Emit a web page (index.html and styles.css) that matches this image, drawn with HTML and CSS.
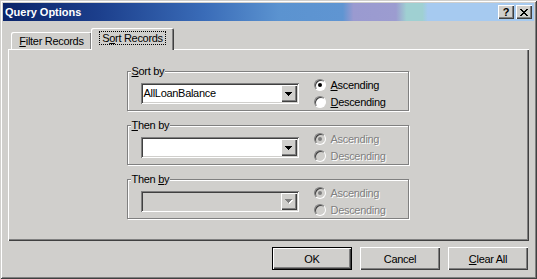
FILE: index.html
```html
<!DOCTYPE html>
<html lang="en">
<head>
  <meta charset="UTF-8">
  <title>Query Options</title>
  <link rel="stylesheet" href="styles.css">
</head>
<body>
  <div class="window">
    <div class="titlebar">
      <span class="title">Query Options</span>
      <div class="caption-btns">
        <div class="cap-btn">?</div>
        <div class="cap-btn">
          <svg width="8" height="7" viewBox="0 0 8 7" shape-rendering="crispEdges">
            <path d="M0 0h2v1h1v1h2v-1h1v-1h2v1h-1v1h-1v1h-1v1h1v1h1v1h1v1h-2v-1h-1v-1h-2v1h-1v1h-2v-1h1v-1h1v-1h1v-1h-1v-1h-1v-1h-1z" fill="#000"/>
          </svg>
        </div>
      </div>
    </div>

    <div class="content">
      <div class="tabs">
        <div class="tab"><u>F</u>ilter Records</div>
        <div class="tab tab-active"><span class="focus">S<u>o</u>rt Records</span></div>
      </div>

      <div class="panel">
        <!-- первая группа -->
        <div class="group">
          <span class="group-label"><u>S</u>ort by</span>
          <div class="combo">
            <span class="combo-text">AllLoanBalance</span>
            <span class="combo-btn">
              <svg width="7" height="4" viewBox="0 0 7 4" shape-rendering="crispEdges"><path d="M0 0h7v1h-1v1h-1v1h-1v1h-1v-1h-1v-1h-1v-1h-1z"/></svg>
            </span>
          </div>
          <div class="radios">
            <div class="radio-item"><span class="radio checked"></span><span><u>A</u>scending</span></div>
            <div class="radio-item"><span class="radio"></span><span><u>D</u>escending</span></div>
          </div>
        </div>

        <!-- вторая группа -->
        <div class="group">
          <span class="group-label"><u>T</u>hen by</span>
          <div class="combo">
            <span class="combo-text"></span>
            <span class="combo-btn">
              <svg width="7" height="4" viewBox="0 0 7 4" shape-rendering="crispEdges"><path d="M0 0h7v1h-1v1h-1v1h-1v1h-1v-1h-1v-1h-1v-1h-1z"/></svg>
            </span>
          </div>
          <div class="radios disabled">
            <div class="radio-item"><span class="radio checked"></span><span>Ascending</span></div>
            <div class="radio-item"><span class="radio"></span><span>Descending</span></div>
          </div>
        </div>

        <!-- третья группа -->
        <div class="group">
          <span class="group-label">Then <u>b</u>y</span>
          <div class="combo combo-disabled">
            <span class="combo-text"></span>
            <span class="combo-btn">
              <svg width="8" height="5" viewBox="0 0 8 5" shape-rendering="crispEdges"><path d="M1 1h7v1h-1v1h-1v1h-1v1h-1v-1h-1v-1h-1v-1h-1z" fill="#fff"/><path d="M0 0h7v1h-1v1h-1v1h-1v1h-1v-1h-1v-1h-1v-1h-1z" fill="#808080"/></svg>
            </span>
          </div>
          <div class="radios disabled">
            <div class="radio-item"><span class="radio checked"></span><span>Ascending</span></div>
            <div class="radio-item"><span class="radio"></span><span>Descending</span></div>
          </div>
        </div>
      </div>

      <div class="buttons">
        <div class="btn btn-default">OK</div>
        <div class="btn">Cancel</div>
        <div class="btn"><u>C</u>lear All</div>
      </div>
    </div>
  </div>
</body>
</html>
```

FILE: styles.css
```css
body {
  margin: 0;
  padding: 0;
  background-color: #d0cfcc;
  font-family: "Liberation Sans", Arial, sans-serif;
  font-size: 11px;
  letter-spacing: -0.3px;
  color: #000;
}
.window {
  box-sizing: border-box;
  width: 537px;
  height: 279px;
  padding: 3px;
  background-color: #d0cfcc;
  box-shadow: inset 1px 1px #d0cfcc, inset -1px -1px #404040, inset 2px 2px #fff, inset -2px -2px #808080;
}
.titlebar {
  height: 18px;
  display: flex;
  align-items: center;
  justify-content: space-between;
  background: linear-gradient(to right, #0a246a 0%, #1c3f8c 18%, #3a6cb8 38%, #5b93d0 52%, #5f95d2 64%, #9a9ad0 66%, #9c9cd0 74%, #9fd0d2 76%, #9fd0d2 79%, #a6caf0 80%, #a6caf0 100%);
}
.title {
  color: #fff;
  font-weight: bold;
  letter-spacing: 0;
  padding-left: 2px;
  line-height: 13px;
}
.caption-btns {
  display: flex;
  gap: 2px;
  margin-right: 2px;
}
.cap-btn {
  box-sizing: border-box;
  width: 16px;
  height: 14px;
  background-color: #d0cfcc;
  box-shadow: inset 1px 1px #fff, inset -1px -1px #404040, inset -2px -2px #808080;
  display: flex;
  align-items: center;
  justify-content: center;
  font-weight: bold;
  font-size: 11px;
  line-height: 14px;
}
.content {
  padding: 7px 5px 0 5px;
}
.tabs {
  display: flex;
  align-items: flex-end;
  height: 21px;
}
.tab {
  box-sizing: border-box;
  width: 81px;
  height: 17px;
  margin-left: 3px;
  padding-top: 3px;
  line-height: 13px;
  text-align: center;
  border-radius: 2px 2px 0 0;
  box-shadow: inset 1px 1px #fff, inset -1px 0 #404040, inset -2px 0 #808080;
}
.tab-active {
  position: relative;
  z-index: 1;
  width: 83px;
  height: 22px;
  margin-left: -1px;
  margin-bottom: -1px;
  padding-top: 4px;
  background-color: #d0cfcc;
}
.focus {
  border: 1px dotted #000;
  padding: 0 2px;
}
.panel {
  box-sizing: border-box;
  height: 192px;
  padding-top: 22px;
  display: flex;
  flex-direction: column;
  align-items: center;
  gap: 14px;
  box-shadow: inset 1px 1px #fff, inset -1px -1px #404040, inset -2px -2px #808080;
}
.group {
  position: relative;
  box-sizing: border-box;
  width: 282px;
  height: 40px;
  margin-right: 2px;
  padding: 5px 0 0 13px;
  display: flex;
  align-items: center;
  border: 1px solid #808080;
  box-shadow: inset 1px 1px #fff, 1px 1px #fff;
}
.group-label {
  position: absolute;
  top: -7px;
  left: 3px;
  padding: 0 1px;
  line-height: 13px;
  background-color: #d0cfcc;
}
.combo {
  box-sizing: border-box;
  width: 158px;
  height: 21px;
  padding: 2px;
  display: flex;
  align-items: center;
  justify-content: space-between;
  background-color: #fff;
  box-shadow: inset 1px 1px #808080, inset -1px -1px #fff, inset 2px 2px #404040, inset -2px -2px #d0cfcc;
}
.combo-disabled {
  background-color: #d0cfcc;
}
.combo-text {
  padding-left: 1px;
  line-height: 13px;
}
.combo-btn {
  box-sizing: border-box;
  width: 16px;
  height: 17px;
  display: flex;
  align-items: center;
  justify-content: center;
  background-color: #d0cfcc;
  box-shadow: inset 1px 1px #fff, inset -1px -1px #404040, inset -2px -2px #808080;
}
.radios {
  margin-left: 15px;
  display: flex;
  flex-direction: column;
  gap: 2px;
}
.radio-item {
  display: flex;
  align-items: center;
  gap: 5px;
  height: 15px;
  line-height: 13px;
}
.radio {
  box-sizing: border-box;
  width: 12px;
  height: 12px;
  border-radius: 50%;
  border: 1px solid;
  border-color: #808080 #fff #fff #808080;
  background-color: #fff;
  box-shadow: inset 1px 1px #404040;
  display: flex;
  align-items: center;
  justify-content: center;
}
.radio.checked::after {
  content: "";
  width: 4px;
  height: 4px;
  border-radius: 50%;
  background-color: #000;
}
.disabled .radio {
  background-color: #d0cfcc;
}
.disabled .radio.checked::after {
  background-color: #808080;
}
.disabled .radio-item {
  color: #808080;
  text-shadow: 1px 1px #fff;
}
.buttons {
  display: flex;
  justify-content: flex-end;
  gap: 8px;
  margin-top: 6px;
  padding-right: 1px;
}
.btn {
  box-sizing: border-box;
  width: 80px;
  height: 23px;
  display: flex;
  align-items: center;
  justify-content: center;
  box-shadow: inset 1px 1px #fff, inset -1px -1px #404040, inset -2px -2px #808080;
}
.btn-default {
  box-shadow: inset 0 0 0 1px #000, inset 2px 2px #fff, inset -2px -2px #404040, inset -3px -3px #808080;
}
```
